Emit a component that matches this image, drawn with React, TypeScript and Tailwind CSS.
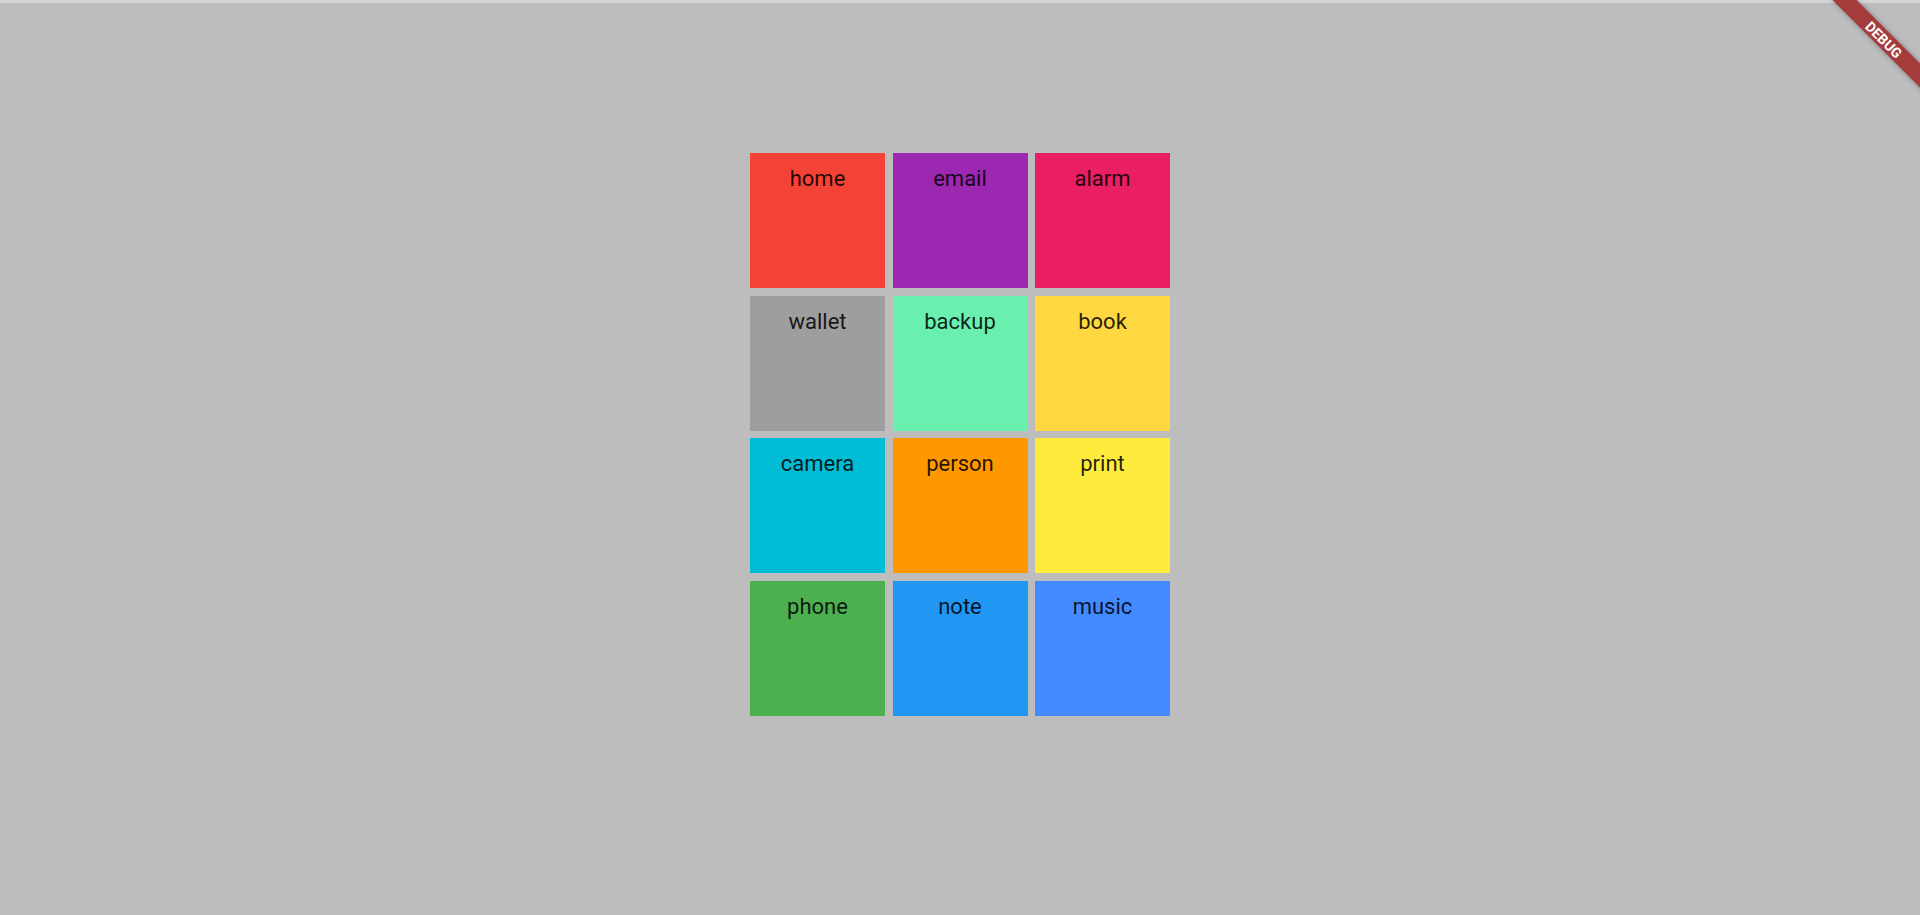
import React from "react";

const tiles: { label: string; bg: string }[] = [
  { label: "home", bg: "bg-[#f44336]" },
  { label: "email", bg: "bg-[#9c27b0]" },
  { label: "alarm", bg: "bg-[#e91e63]" },
  { label: "wallet", bg: "bg-[#9e9e9e]" },
  { label: "backup", bg: "bg-[#69f0ae]" },
  { label: "book", bg: "bg-[#ffd740]" },
  { label: "camera", bg: "bg-[#00bcd4]" },
  { label: "person", bg: "bg-[#ff9800]" },
  { label: "print", bg: "bg-[#ffeb3b]" },
  { label: "phone", bg: "bg-[#4caf50]" },
  { label: "note", bg: "bg-[#2196f3]" },
  { label: "music", bg: "bg-[#448aff]" },
];

export default function App() {
  return (
    <div
      className="relative w-full h-[915px] overflow-hidden bg-[#bdbdbd] flex flex-col"
      style={{ fontFamily: "Roboto, 'Noto Sans', sans-serif" }}
    >
      <div className="h-[3px] w-full bg-[#d5d5d5] shrink-0" />
      <div className="flex justify-center pt-[150px]">
        <div className="grid grid-cols-[135px_135px_135px] auto-rows-[135px] gap-[7.5px]">
          {tiles.map((t) => (
            <div key={t.label} className={`${t.bg} flex justify-center pt-[13px]`}>
              <span className="text-[22px] leading-[26px] text-black/[0.87]">{t.label}</span>
            </div>
          ))}
        </div>
      </div>
      <div className="pointer-events-none absolute left-[1819px] top-[31px] w-[130px] h-[17px] rotate-45 bg-[#a53c3c] shadow-[0_0_5px_rgba(0,0,0,0.35)] flex items-center justify-center">
        <span className="text-[14px] leading-none font-bold text-white">DEBUG</span>
      </div>
    </div>
  );
}
